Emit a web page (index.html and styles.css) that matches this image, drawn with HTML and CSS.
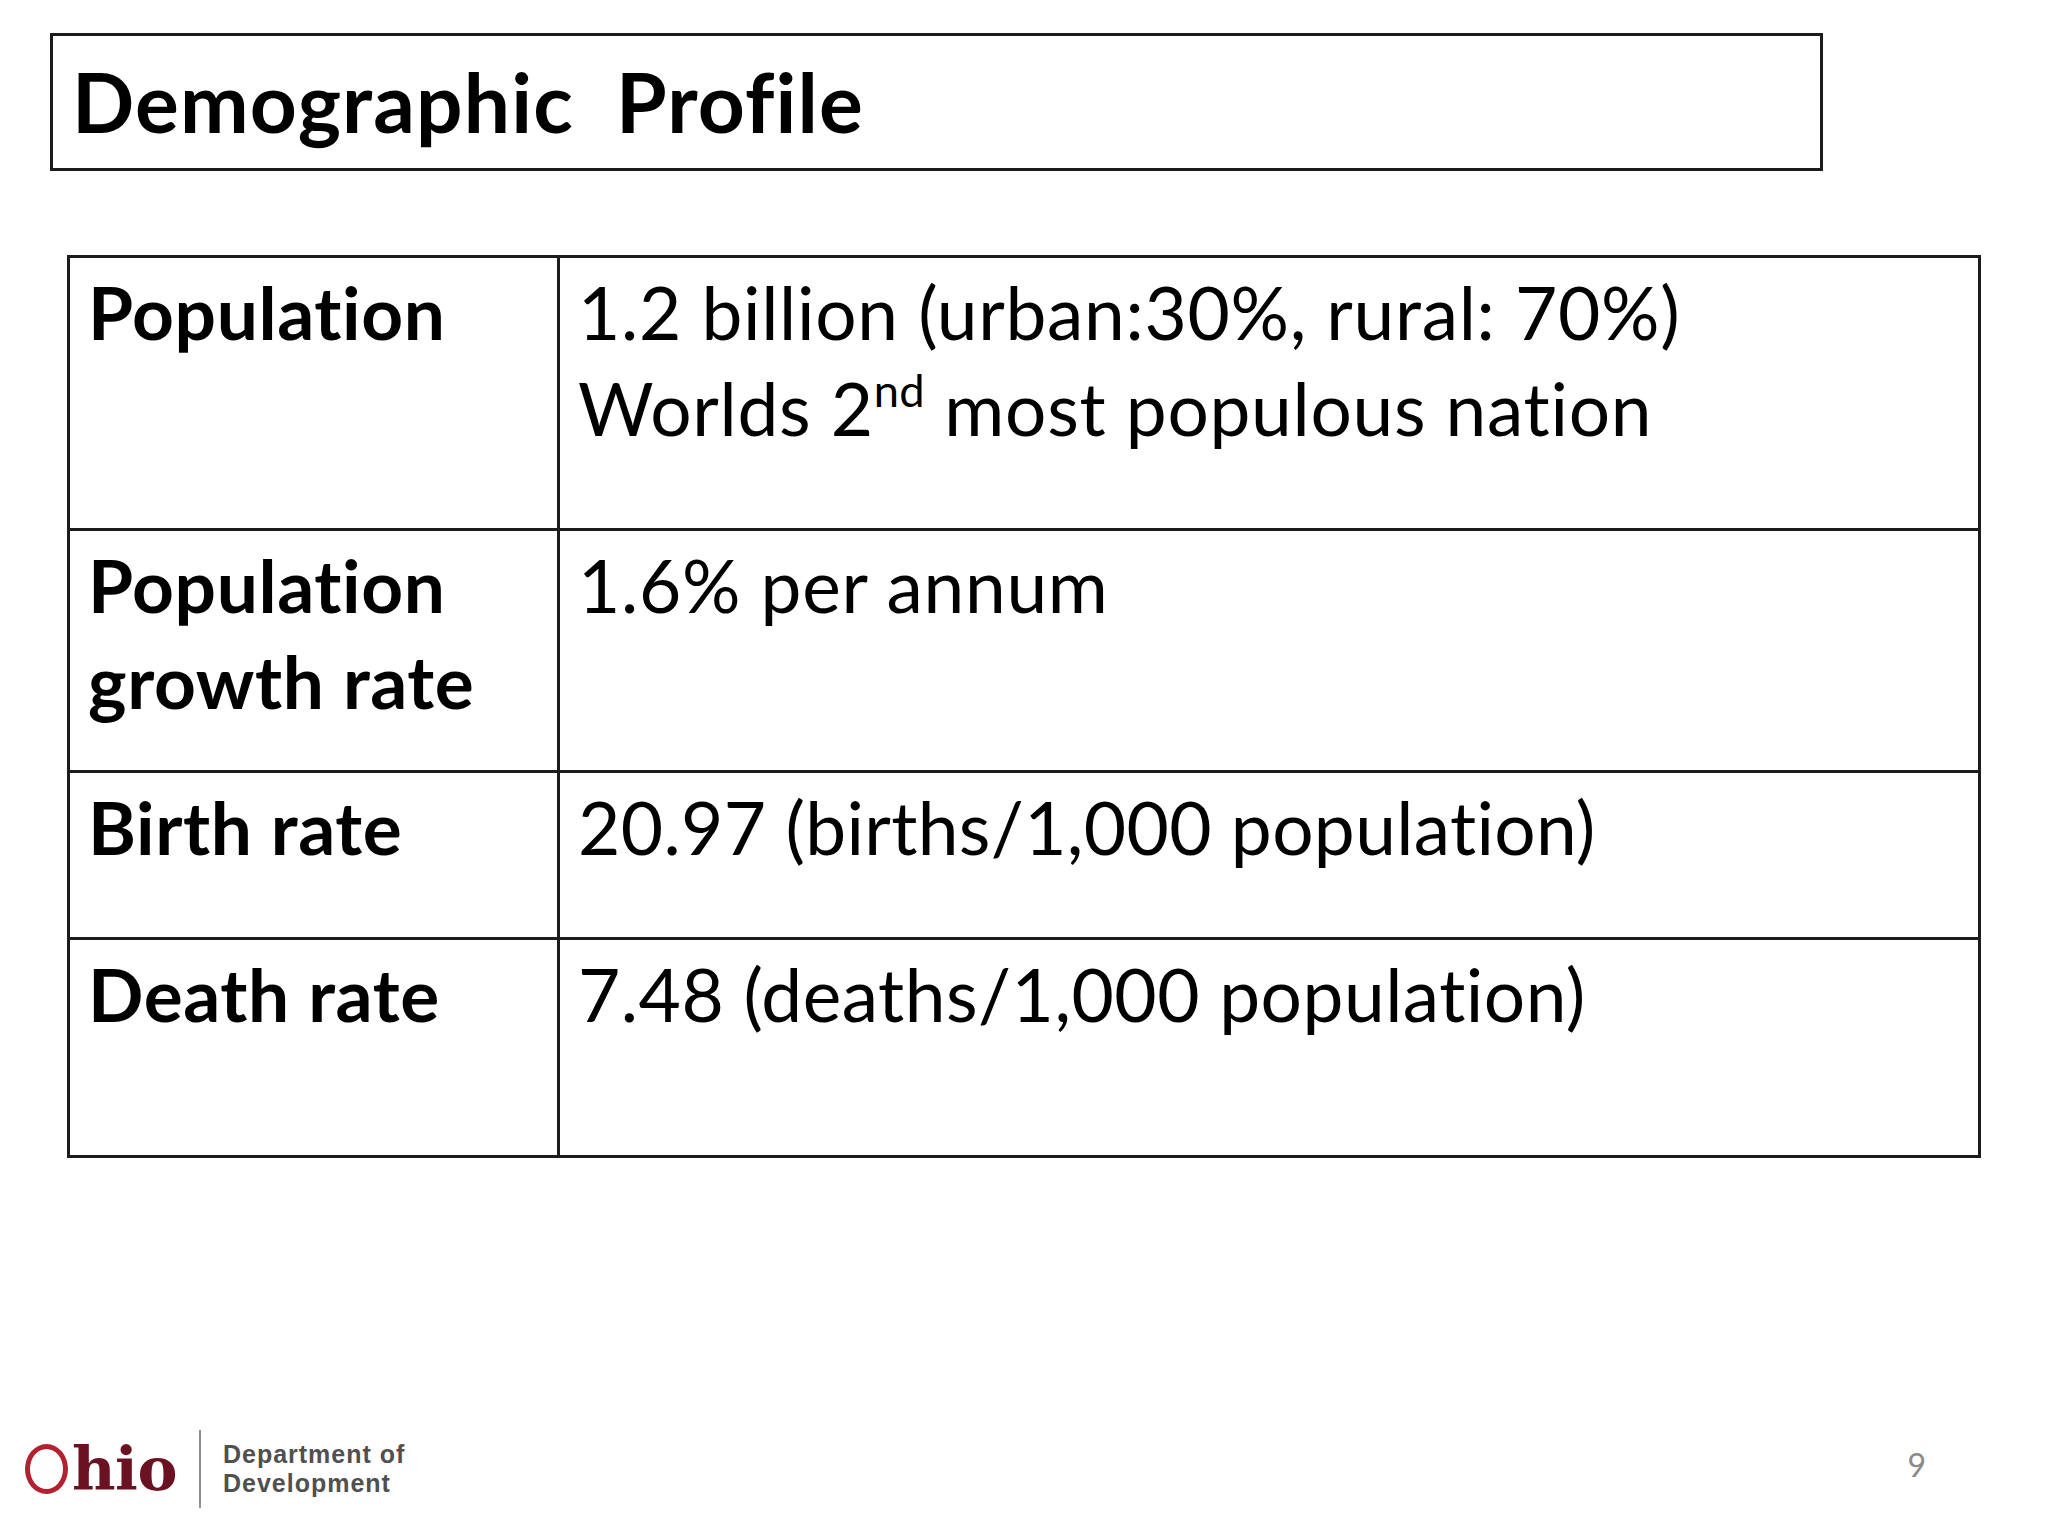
FILE: index.html
```html
<!DOCTYPE html>
<html lang="en">
<head>
<meta charset="utf-8">
<title>Demographic Profile</title>
<link rel="stylesheet" href="styles.css">
</head>
<body>
<div class="slide">
  <div class="title-box">
    <h1 class="title">Demographic&nbsp; Profile</h1>
  </div>

  <div class="table">
    <div class="cell label r1">Population</div>
    <div class="cell value r1">1.2 billion (urban:30%, rural: 70%)<br>Worlds 2<sup class="sup">nd</sup> most populous nation</div>

    <div class="cell label r2">Population growth rate</div>
    <div class="cell value r2">1.6% per annum</div>

    <div class="cell label r3">Birth rate</div>
    <div class="cell value r3">20.97 (births/1,000 population)</div>

    <div class="cell label r4">Death rate</div>
    <div class="cell value r4">7.48 (deaths/1,000 population)</div>
  </div>

  <div class="footer">
    <div class="logo">
      <div class="ohio">
        <span class="ohio-o"></span><span class="ohio-hio">hio</span>
      </div>
      <span class="logo-sep"></span>
      <div class="dept">
        <span class="dept-line">Department of</span>
        <span class="dept-line">Development</span>
      </div>
    </div>
    <div class="page-num">9</div>
  </div>
</div>
</body>
</html>
```

FILE: styles.css
```css
html, body {
  margin: 0;
  padding: 0;
  background: #ffffff;
}

.slide {
  width: 2048px;
  height: 1536px;
  display: flex;
  flex-direction: column;
  background: #ffffff;
  color: #000000;
  font-family: "Lato", "Open Sans", "Liberation Sans", sans-serif;
  font-variant-ligatures: none;
  overflow: hidden;
}

/* ---------- title ---------- */
.title-box {
  box-sizing: border-box;
  width: 1773px;
  height: 138px;
  margin: 33px 0 0 50px;
  border: 3px solid #1c1c1c;
  padding: 25px 0 0 19px;
}

.title {
  margin: 0;
  font-size: 82px;
  line-height: 80px;
  font-weight: 700;
  letter-spacing: 1.15px;
  white-space: nowrap;
}

/* ---------- table ---------- */
.table {
  display: grid;
  grid-template-columns: 490px 1421px;
  grid-template-rows: 273px 242px 167px 218px;
  box-sizing: border-box;
  width: 1914px;
  margin: 84px 0 0 67px;
  border-top: 3px solid #1c1c1c;
  border-left: 3px solid #1c1c1c;
}

.cell {
  box-sizing: border-box;
  border-right: 3px solid #1c1c1c;
  border-bottom: 3px solid #1c1c1c;
  padding: 6px 14px 0 18px;
  font-size: 73px;
  line-height: 96px;
}

.label {
  font-weight: 700;
  padding-right: 6px;
  letter-spacing: 0.6px;
}

.value {
  font-weight: 400;
  padding-left: 18px;
  letter-spacing: 0.7px;
}

.r3.value {
  letter-spacing: 0.35px;
}

.r4.value {
  letter-spacing: 0.5px;
}

.sup {
  font-size: 0.62em;
  line-height: 0;
  vertical-align: 0.64em;
  letter-spacing: 0.3px;
}

/* ---------- footer ---------- */
.footer {
  margin-top: auto;
  margin-bottom: 28px;
  height: 78px;
  display: flex;
  align-items: center;
  justify-content: space-between;
  padding: 0 122px 0 25px;
}

.logo {
  display: flex;
  align-items: center;
  height: 78px;
}

.ohio {
  display: flex;
  align-items: flex-end;
  height: 52px;
}

.ohio-o {
  display: inline-block;
  box-sizing: border-box;
  width: 43px;
  height: 50px;
  border: 5px solid #b3202f;
  border-radius: 50%;
  margin-bottom: 1px;
}

.ohio-hio {
  font-family: "DejaVu Serif", "Liberation Serif", serif;
  font-weight: 700;
  font-size: 60px;
  line-height: 52px;
  color: #6b1222;
  margin-left: 4px;
  letter-spacing: -0.5px;
}

.logo-sep {
  display: block;
  width: 2px;
  height: 78px;
  background: #8e8e8e;
  margin-left: 22px;
}

.dept {
  display: flex;
  flex-direction: column;
  margin-left: 22px;
  font-family: "Liberation Sans", "Open Sans", sans-serif;
  font-weight: 700;
  font-size: 25px;
  line-height: 29px;
  color: #505050;
  letter-spacing: 1px;
}

.dept-line {
  display: block;
  height: 29px;
}

.page-num {
  font-family: "Lato", "Liberation Sans", sans-serif;
  font-size: 32px;
  line-height: 32px;
  color: #8a8a8a;
  margin-bottom: 8px;
}
```
